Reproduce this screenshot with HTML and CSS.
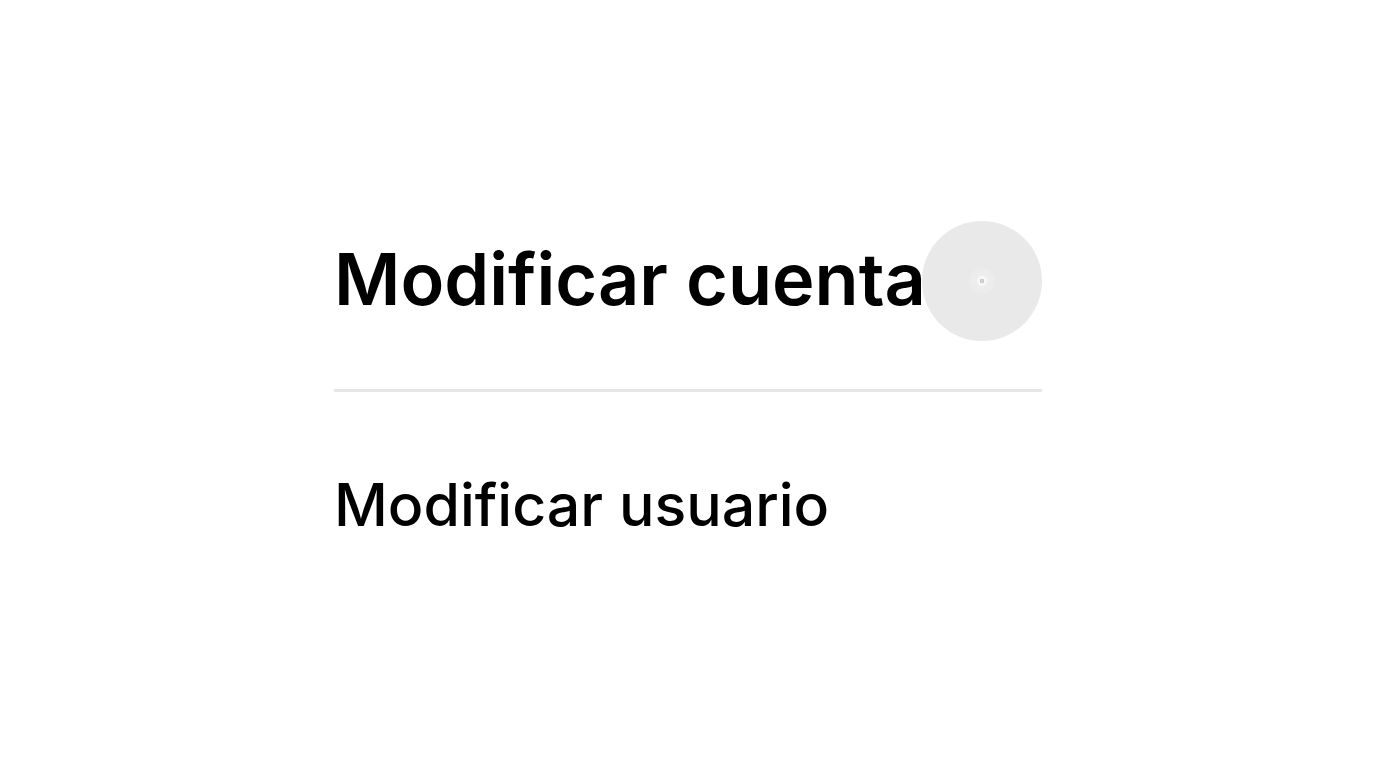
FILE: index.html
```html
<!DOCTYPE html>
<html lang="es">
<head>
<meta charset="utf-8">
<title>Modificar cuenta</title>
<link rel="stylesheet" href="styles.css">
</head>
<body>
<main class="panel">
  <header class="panel-header">
    <h1 class="title">Modificar cuenta</h1>
    <button class="close" type="button" aria-label="Cerrar">
      <svg class="close-icon" viewBox="0 0 30 30" aria-hidden="true">
        <defs>
          <radialGradient id="glow">
            <stop offset="0" stop-color="#fff"/>
            <stop offset="0.2" stop-color="#f8f8f8"/>
            <stop offset="0.36" stop-color="#eee"/>
            <stop offset="0.85" stop-color="#ececec"/>
            <stop offset="1" stop-color="#e9e9e9"/>
          </radialGradient>
        </defs>
        <circle cx="15" cy="15" r="14" fill="url(#glow)"/>
        <circle cx="15" cy="15" r="5" fill="#f8f8f8"/>
        <rect x="13" y="13" width="4" height="4" rx="1" fill="#c8c8c8"/>
        <rect x="14" y="14" width="2" height="2" fill="#d4d4d4"/>
      </svg>
    </button>
  </header>
  <h2 class="subtitle">Modificar usuario</h2>
</main>
</body>
</html>
```
FILE: styles.css
```css
body {
  margin: 0;
  min-height: 100vh;
  display: flex;
  justify-content: center;
  align-items: center;
  background: #fff;
  color: #000;
  font-family: Inter, sans-serif;
}

.panel {
  display: flex;
  flex-direction: column;
  gap: 77px;
  width: 100%;
  max-width: 708px;
  padding-bottom: 6px;
}

.panel-header {
  display: flex;
  align-items: center;
  padding-bottom: 48px;
  border-bottom: 3px solid #e6e6e6;
}

.title,
.subtitle {
  margin: 0;
}

.title {
  flex: 1;
  min-width: 0;
  padding-bottom: 4px;
  font-size: 72px;
  line-height: 88px;
  font-weight: 600;
  white-space: nowrap;
}

.close {
  display: grid;
  place-items: center;
  flex: none;
  width: 120px;
  height: 120px;
  padding: 0;
  border: 0;
  border-radius: 50%;
  background: #e9e9e9;
}

.close-icon {
  width: 30px;
  height: 30px;
}

.subtitle {
  font-size: 59px;
  line-height: 72px;
  font-weight: 500;
}
```
